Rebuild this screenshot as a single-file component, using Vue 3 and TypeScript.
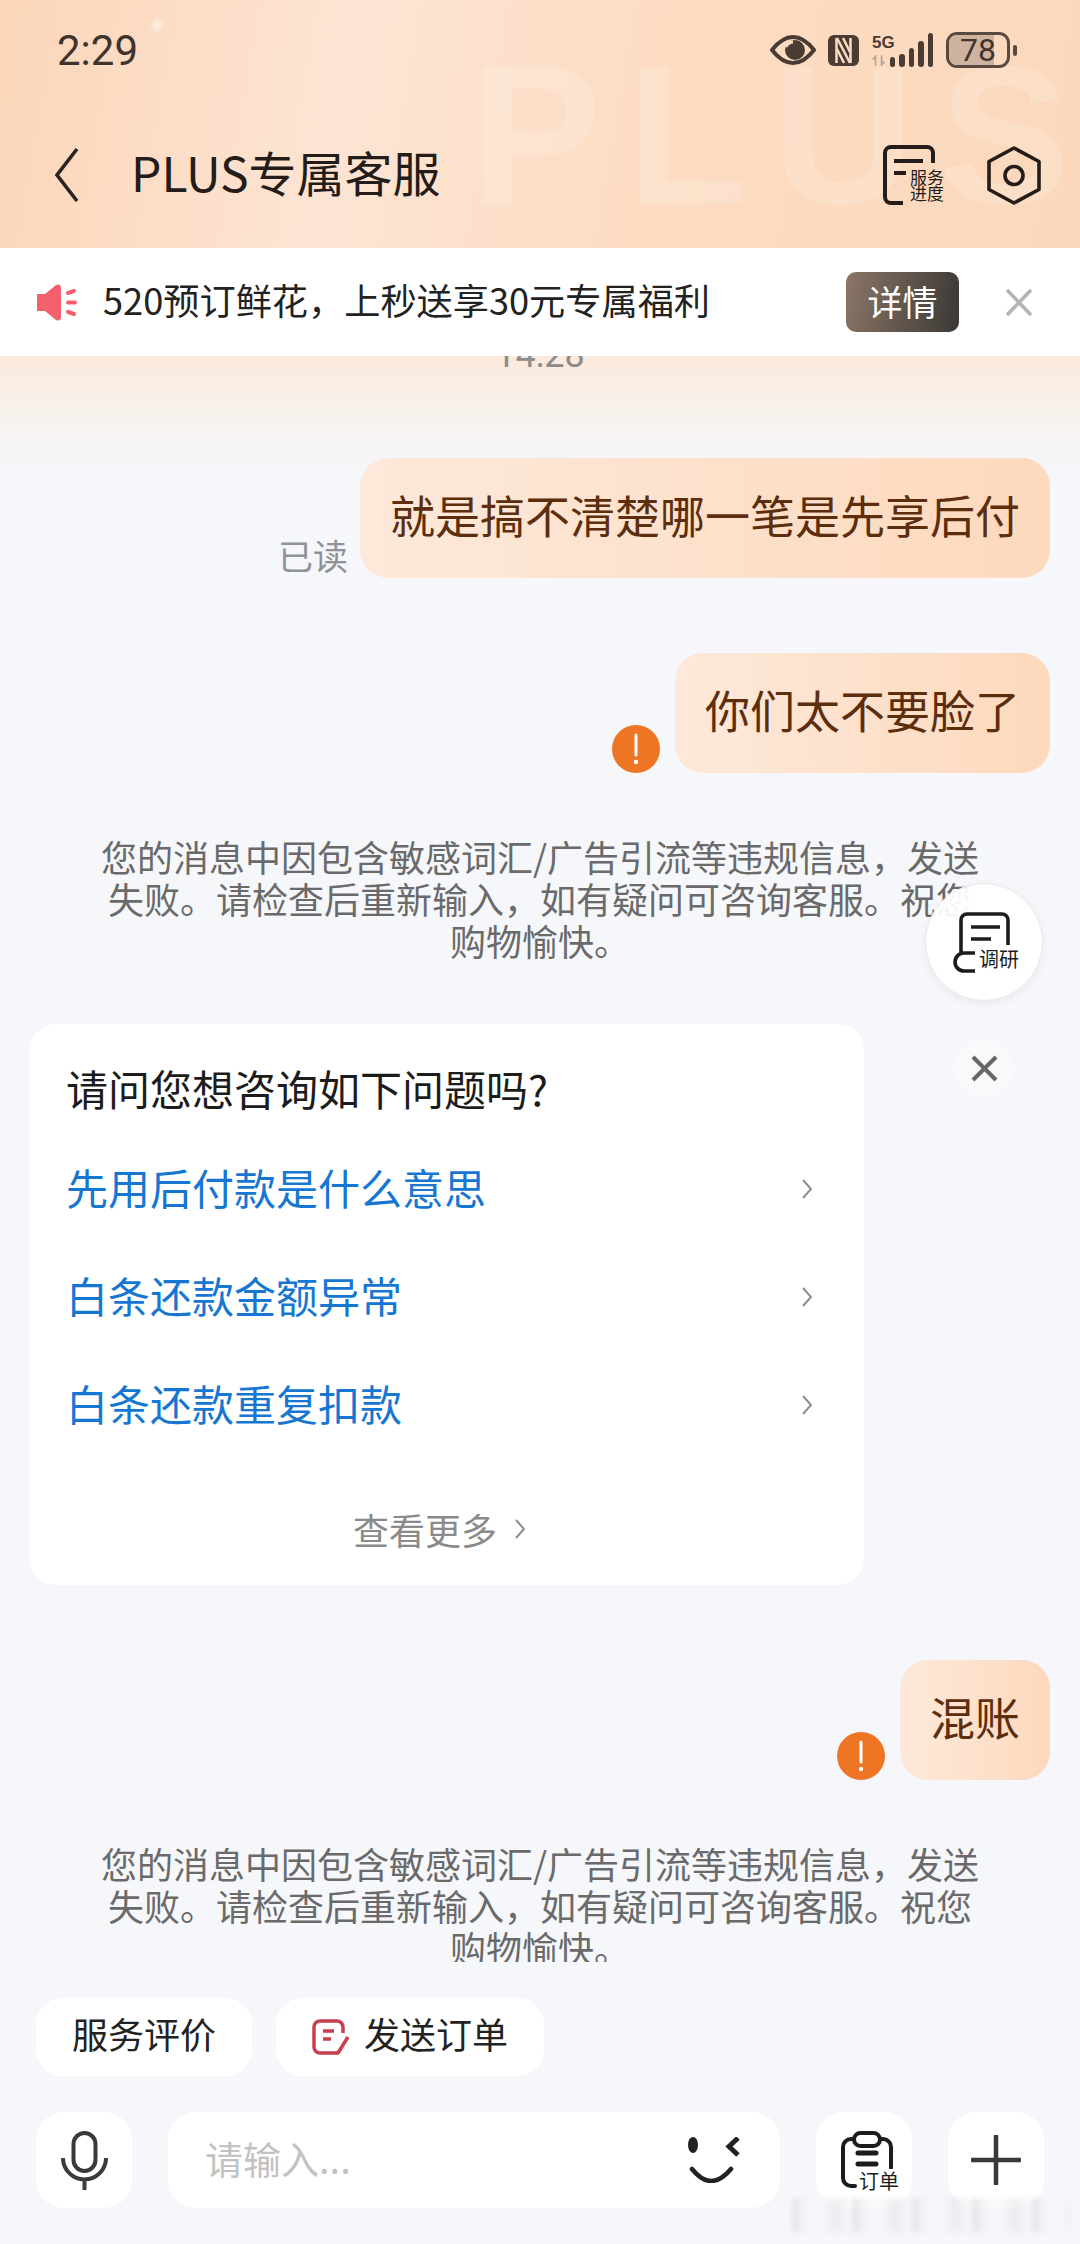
<script setup lang="ts">
const notice = '您的消息中因包含敏感词汇/广告引流等违规信息，发送失败。请检查后重新输入，如有疑问可咨询客服。祝您购物愉快。'
const questions = ['先用后付款是什么意思', '白条还款金额异常', '白条还款重复扣款']
</script>

<template>
  <div class="page">
    <header class="top">
      <span class="watermark">PLUS</span>
      <div class="status">
        <span class="clock">2:29</span>
        <div class="status-icons">
          <svg class="eye" viewBox="0 0 46 30">
            <path d="M2 15C9 6 15 2 23 2s14 4 21 13c-7 9-13 13-21 13S9 24 2 15z" fill="none" stroke="#4a3c33" stroke-width="4" stroke-linejoin="round" />
            <circle cx="25" cy="15" r="10" fill="#4a3c33" />
            <path d="M16 12a8 8 0 0 1 7-5" fill="none" stroke="#fbdcc3" stroke-width="3" />
          </svg>
          <svg class="nfc" viewBox="0 0 31 31">
            <rect x="0" y="0" width="31" height="31" rx="6" fill="#4a3c33" />
            <path d="M8.500 3v25M22.500 3v25" stroke="#fbdcc3" stroke-width="2.500" />
            <path d="M9 3l13 25M15 3l7 14M9 14l7 14" stroke="#fbdcc3" stroke-width="2.500" fill="none" />
          </svg>
          <div class="net">
            <span class="net-label">5G</span>
            <svg class="arrows" viewBox="0 0 16 12">
              <path d="M4 12V1L1 5M11 0v11l3-4" fill="none" stroke="#b8a798" stroke-width="2" />
            </svg>
          </div>
          <div class="bars">
            <i class="b1"></i><i class="b2"></i><i class="b3"></i><i class="b4"></i><i class="b5"></i>
          </div>
          <div class="battery">
            <div class="level"></div>
            <span>78</span>
          </div>
          <i class="battery-tip"></i>
        </div>
      </div>
      <div class="nav">
        <svg class="back" viewBox="0 0 25 56">
          <path d="M23 2L3 28l20 26" fill="none" stroke="#2b2320" stroke-width="3.600" />
        </svg>
        <h1>PLUS专属客服</h1>
        <div class="doc-icon">
          <svg viewBox="0 0 61 60">
            <path d="M50 18V8a6 6 0 0 0-6-6H8a6 6 0 0 0-6 6v44a6 6 0 0 0 6 6h12" fill="none" stroke="#231c18" stroke-width="4" />
            <path d="M11 16h29M11 28h12" stroke="#231c18" stroke-width="4" />
          </svg>
          <span>服务<br />进度</span>
        </div>
        <svg class="hex" viewBox="0 0 54 59">
          <path d="M27 2l25 13.500v28L27 57 2 43.500v-28z" fill="none" stroke="#231c18" stroke-width="3.600" stroke-linejoin="round" />
          <circle cx="27" cy="29.500" r="9" fill="none" stroke="#231c18" stroke-width="3.600" />
        </svg>
      </div>
    </header>

    <div class="banner">
      <svg class="horn" viewBox="0 0 41 37">
        <path d="M1 10h8L20 1c2-1 5-1 5 3v29c0 4-3 4-5 3L9 27H1z" fill="#f4606c" />
        <path d="M32 9l6-2M32 18.500h7M32 28l6 2" stroke="#f4606c" stroke-width="4" stroke-linecap="round" />
      </svg>
      <span class="banner-text">520预订鲜花，上秒送享30元专属福利</span>
      <button class="detail">详情</button>
      <svg class="banner-close" viewBox="0 0 28 29">
        <path d="M2 2l24 25M26 2L2 27" stroke="#b4b4b4" stroke-width="3.600" />
      </svg>
    </div>

    <main class="chat">
      <div class="time"><span>14:28</span></div>

      <div class="msg first">
        <span class="read">已读</span>
        <div class="bubble">就是搞不清楚哪一笔是先享后付</div>
      </div>

      <div class="msg second">
        <svg class="warn" viewBox="0 0 48 48">
          <circle cx="24" cy="24" r="24" fill="#ee7524" />
          <path d="M24 10v20" stroke="#fff" stroke-width="3" stroke-linecap="round" />
          <circle cx="24" cy="37" r="2.200" fill="#fff" />
        </svg>
        <div class="bubble">你们太不要脸了</div>
      </div>

      <p class="notice n1">{{ notice }}</p>

      <section class="card">
        <h2>请问您想咨询如下问题吗?</h2>
        <div v-for="q in questions" :key="q" class="question">
          <span>{{ q }}</span>
          <svg viewBox="0 0 12 20"><path d="M2 1l8 9-8 9" fill="none" stroke="#8d8d8d" stroke-width="2" /></svg>
        </div>
        <div class="more">
          查看更多
          <svg viewBox="0 0 12 20"><path d="M2 1l8 9-8 9" fill="none" stroke="#8d8d8d" stroke-width="2" /></svg>
        </div>
      </section>

      <div class="msg third">
        <svg class="warn" viewBox="0 0 48 48">
          <circle cx="24" cy="24" r="24" fill="#ee7524" />
          <path d="M24 10v20" stroke="#fff" stroke-width="3" stroke-linecap="round" />
          <circle cx="24" cy="37" r="2.200" fill="#fff" />
        </svg>
        <div class="bubble">混账</div>
      </div>

      <p class="notice n2">{{ notice }}</p>

      <div class="chips">
        <button class="chip"><span>服务评价</span></button>
        <button class="chip">
          <svg viewBox="0 0 38 36">
            <path d="M27 34H8a6 6 0 0 1-6-6V8a6 6 0 0 1 6-6h17a6 6 0 0 1 6 6v6" fill="none" stroke="#c8404f" stroke-width="3.500" />
            <path d="M11 12h11M11 20h8" stroke="#c8404f" stroke-width="3.500" />
            <path d="M36 18L26 34" stroke="#c8404f" stroke-width="3.500" />
          </svg>
          <span>发送订单</span>
        </button>
      </div>

      <div class="inputbar">
        <div class="square">
          <svg class="mic" viewBox="0 0 47 59">
            <rect x="12.500" y="2" width="22" height="38" rx="11" fill="none" stroke="#3a3a3a" stroke-width="4" />
            <path d="M2 27a21.500 21.500 0 0 0 43 0M23.500 49v10" fill="none" stroke="#3a3a3a" stroke-width="4" />
          </svg>
        </div>
        <div class="field">
          <span>请输入...</span>
          <svg class="smile" viewBox="0 0 54 46">
            <ellipse cx="5" cy="8" rx="5" ry="8" fill="#222" />
            <path d="M50 1l-9 8.500 9 8.500" fill="none" stroke="#222" stroke-width="5" />
            <path d="M4 32Q23 56 43 32" fill="none" stroke="#222" stroke-width="4.500" stroke-linecap="round" />
          </svg>
        </div>
        <div class="square order">
          <svg viewBox="0 0 52 58">
            <path d="M13 8h-3a8 8 0 0 0-8 8v31a8 8 0 0 0 8 8h4M39 8h3a8 8 0 0 1 8 8v21" fill="none" stroke="#1c1c1c" stroke-width="4" stroke-linecap="round" />
            <rect x="13" y="2" width="26" height="13" rx="6.500" fill="none" stroke="#1c1c1c" stroke-width="4" />
            <path d="M17 22h18M17 33h18" stroke="#1c1c1c" stroke-width="5" stroke-linecap="round" />
          </svg>
          <span>订单</span>
        </div>
        <div class="square">
          <svg class="plus" viewBox="0 0 50 50">
            <path d="M25 1v48M1 25h48" stroke="#3a3a3a" stroke-width="4.500" stroke-linecap="round" />
          </svg>
        </div>
      </div>
    </main>

    <div class="survey">
      <svg viewBox="0 0 58 62">
        <path d="M55 34V9a6 6 0 0 0-6-6H14a6 6 0 0 0-6 6v33" fill="none" stroke="#1c1c1c" stroke-width="3.600" />
        <path d="M18 16h29M18 28h20" stroke="#1c1c1c" stroke-width="3.600" />
        <path d="M22 42H11a9 9 0 0 0 0 18h11" fill="none" stroke="#1c1c1c" stroke-width="3.600" />
      </svg>
      <span>调研</span>
    </div>
    <div class="card-close">
      <svg viewBox="0 0 27 27"><path d="M2 2l23 23M25 2L2 25" stroke="#666" stroke-width="4" /></svg>
    </div>
    <div class="blur-mark"></div>
  </div>
</template>

<style>
html, body {
  margin: 0;
  background: #f5f7fb;
}
</style>

<style scoped>
.page {
  position: relative;
  width: 1080px;
  height: 2244px;
  overflow: hidden;
  background: #f5f7fb;
  font-family: "Noto Sans CJK SC", "Liberation Sans", sans-serif;
  color: #1c1c1c;
}

.top {
  position: relative;
  height: 248px;
  overflow: hidden;
  background:
    radial-gradient(circle at 157px 25px, rgba(255, 255, 255, 0.6) 0, rgba(255, 255, 255, 0) 8px),
    linear-gradient(100deg, #fbd6b9 0%, #fde4d3 32%, #fcdcc3 60%, #fbd8bc 100%);
}

.watermark {
  position: absolute;
  left: 470px;
  top: 25px;
  font: 700 197px/220px "Liberation Sans", sans-serif;
  letter-spacing: 25px;
  color: rgba(255, 255, 255, 0.16);
  white-space: nowrap;
}

.status {
  position: relative;
  height: 100px;
  display: flex;
  justify-content: space-between;
  align-items: center;
  padding: 0 63px 0 57px;
}

.clock {
  font: 400 42px Roboto, sans-serif;
  color: #3f332c;
}

.status-icons {
  display: flex;
  align-items: center;
}

.eye { width: 46px; height: 30px; }
.nfc { width: 31px; height: 31px; margin-left: 12px; }

.net {
  width: 23px;
  margin-left: 13px;
  display: flex;
  flex-direction: column;
  align-items: flex-start;
}

.net-label {
  font: 700 17px/18px "Liberation Sans", sans-serif;
  color: #4a3c33;
}

.arrows { width: 14px; height: 11px; margin-top: 3px; }

.bars {
  height: 34px;
  display: flex;
  align-items: flex-end;
  gap: 4px;
  margin-left: -5px;
}

.bars i {
  width: 5.400px;
  background: #4a3c33;
  border-radius: 3px;
}

.b1 { height: 10px; }
.b2 { height: 13px; }
.b3 { height: 19px; }
.b4 { height: 26px; }
.b5 { height: 34px; }

.battery {
  position: relative;
  box-sizing: border-box;
  width: 64px;
  height: 36px;
  margin-left: 13px;
  border: 3px solid #594a3f;
  border-radius: 11px;
  overflow: hidden;
  display: flex;
  align-items: center;
  justify-content: center;
}

.level {
  position: absolute;
  left: 0;
  top: 0;
  bottom: 0;
  width: 78%;
  background: #cdb3a0;
}

.battery span {
  position: relative;
  font: 400 32px Roboto, sans-serif;
  color: #42352d;
}

.battery-tip {
  width: 4px;
  height: 11px;
  margin-left: 3px;
  background: #594a3f;
  border-radius: 2px;
}

.nav {
  position: relative;
  height: 148px;
  display: flex;
  align-items: center;
  padding: 2px 39px 0 54px;
  box-sizing: border-box;
}

.back { width: 25px; height: 56px; }

h1 {
  flex: 1;
  margin: 0 0 8px 52px;
  font-size: 48px;
  font-weight: 400;
  color: #231c18;
}

.doc-icon {
  position: relative;
  width: 61px;
  height: 60px;
}

.doc-icon svg { width: 61px; height: 60px; display: block; }

.doc-icon span {
  position: absolute;
  left: 27px;
  top: 24px;
  font-size: 17px;
  line-height: 16px;
  color: #231c18;
  white-space: nowrap;
}

.hex { width: 54px; height: 59px; margin-left: 43px; }

.banner {
  height: 108px;
  background: #fff;
  display: flex;
  align-items: center;
  padding: 0 47px 0 36px;
  box-sizing: border-box;
  position: relative;
}

.horn { width: 41px; height: 37px; flex: none; }

.banner-text {
  flex: 1;
  margin-left: 26px;
  padding-bottom: 6px;
  font-size: 36.200px;
  color: #222;
  white-space: nowrap;
}

.detail {
  width: 113px;
  height: 60px;
  padding: 0 0 3px;
  border: none;
  border-radius: 10px;
  background: linear-gradient(100deg, #8b7666 0%, #3a3836 100%);
  color: #fff;
  font: 400 35px "Noto Sans CJK SC", sans-serif;
}

.banner-close { width: 28px; height: 29px; margin-left: 46px; flex: none; }

.chat {
  height: 1888px;
  overflow: hidden;
  background: linear-gradient(180deg, #fbe9dc 0, #f8f1eb 50px, #f6f5f6 90px, #f5f7fb 130px);
  padding: 0 30px;
  box-sizing: border-box;
}

.time {
  height: 16px;
  position: relative;
  overflow: hidden;
}

.time span {
  position: absolute;
  left: 0;
  right: 0;
  top: -22px;
  text-align: center;
  font: 400 36px Roboto, sans-serif;
  color: #8c8c8c;
}

.msg {
  display: flex;
  justify-content: flex-end;
  align-items: flex-end;
}

.msg.first { margin-top: 86px; }
.msg.second { margin-top: 75px; }
.msg.third { margin-top: 75px; }

.bubble {
  height: 120px;
  box-sizing: border-box;
  padding: 0 30px 8px;
  display: flex;
  align-items: center;
  border-radius: 28px;
  background: linear-gradient(90deg, #fde9da 0%, #fdd9bd 100%);
  color: #5c2e0e;
  font-size: 45px;
  white-space: nowrap;
}

.read {
  margin-right: 12px;
  font-size: 35px;
  line-height: 44px;
  padding-bottom: 1px;
  color: #8f9299;
}

.warn {
  width: 48px;
  height: 48px;
  margin-right: 15px;
  flex: none;
}

.notice {
  width: 885px;
  margin: 62px auto 0;
  font-size: 36px;
  line-height: 42px;
  color: #6a6a6a;
  text-align: center;
}

.n2 {
  height: 120px;
  overflow: hidden;
}

.card {
  width: 834px;
  height: 561px;
  box-sizing: border-box;
  margin-top: 63px;
  padding: 40px 51px 0 36px;
  border-radius: 26px;
  background: #fff;
}

.card h2 {
  margin: 0 0 23px;
  font-size: 42px;
  line-height: 48px;
  font-weight: 400;
  color: #1c1c1c;
}

.question {
  height: 108px;
  padding-bottom: 6px;
  box-sizing: border-box;
  display: flex;
  align-items: center;
  justify-content: space-between;
  font-size: 42px;
  color: #1677d2;
}

.question svg { width: 12px; height: 20px; margin-top: 6px; }

.more {
  margin-top: 44px;
  display: flex;
  align-items: center;
  justify-content: center;
  gap: 17px;
  font-size: 36px;
  line-height: 52px;
  color: #8a8a8a;
}

.more svg { width: 12px; height: 20px; }

.chips {
  margin-top: 36px;
  display: flex;
  gap: 24px;
  padding-left: 6px;
}

.chip {
  height: 78px;
  padding: 0 36px;
  border: none;
  border-radius: 26px;
  background: #fff;
  display: flex;
  align-items: center;
  gap: 14px;
  color: #222;
  font: 400 36px "Noto Sans CJK SC", sans-serif;
}

.chip span { margin-bottom: 8px; }

.chip svg { width: 38px; height: 36px; }

.inputbar {
  margin-top: 36px;
  display: flex;
  align-items: center;
  gap: 36px;
  padding: 0 6px;
}

.square {
  position: relative;
  width: 96px;
  height: 96px;
  flex: none;
  border-radius: 28px;
  background: #fff;
  display: flex;
  align-items: center;
  justify-content: center;
}

.mic { width: 47px; height: 59px; }
.plus { width: 50px; height: 50px; }

.order svg {
  position: absolute;
  left: 25px;
  top: 19px;
  width: 52px;
  height: 58px;
}

.order span {
  position: absolute;
  left: 43px;
  top: 57px;
  font-size: 20px;
  line-height: 24px;
  color: #1c1c1c;
  background: #fff;
}

.field {
  flex: none;
  width: 612px;
  height: 96px;
  box-sizing: border-box;
  padding: 0 38px 0 37px;
  border-radius: 28px;
  background: #fff;
  display: flex;
  align-items: center;
  justify-content: space-between;
  font-size: 38px;
  color: #c2c2c2;
}

.field span { margin-bottom: 5px; }

.smile { width: 54px; height: 46px; }

.survey {
  position: absolute;
  left: 925px;
  top: 883px;
  width: 118px;
  height: 118px;
  box-sizing: border-box;
  border-radius: 50%;
  background: rgba(255, 255, 255, 0.94);
  border: 1px solid #e8e8e8;
  box-shadow: 0 3px 8px rgba(0, 0, 0, 0.06);
}

.survey svg {
  position: absolute;
  left: 27px;
  top: 27px;
  width: 58px;
  height: 62px;
}

.survey span {
  position: absolute;
  left: 51px;
  top: 63px;
  padding-left: 2px;
  font-size: 20px;
  line-height: 24px;
  color: #1c1c1c;
  background: #fff;
}

.card-close {
  position: absolute;
  left: 954px;
  top: 1038px;
  width: 60px;
  height: 60px;
  border-radius: 50%;
  background: #f9f9fb;
  display: flex;
  align-items: center;
  justify-content: center;
}

.card-close svg { width: 27px; height: 27px; }

.blur-mark {
  position: absolute;
  left: 792px;
  top: 2198px;
  width: 279px;
  height: 35px;
  filter: blur(2px);
  background: repeating-linear-gradient(90deg, #dfe0e3 0, #f4f5f8 14px, #f9f9fb 28px, #e9eaed 42px, #f8f8fa 60px);
  opacity: 0.75;
}
</style>
